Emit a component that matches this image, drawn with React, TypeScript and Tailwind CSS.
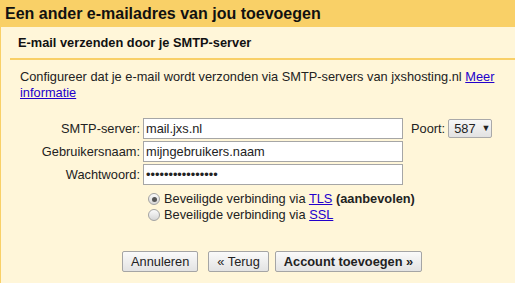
import React from "react";

function Radio({ checked }: { checked?: boolean }) {
  return (
    <span className="relative inline-block w-[12px] h-[12px] shrink-0 rounded-full border border-[#a3a3a3] bg-gradient-to-b from-[#fbfbfb] to-[#d6d6d6]">
      {checked && (
        <span className="absolute left-[2.5px] top-[2.5px] w-[5px] h-[5px] rounded-full bg-[#555]" />
      )}
    </span>
  );
}

function Btn({ children, bold }: { children: React.ReactNode; bold?: boolean }) {
  return (
    <button
      className={
        "h-[21px] px-[8px] rounded-[2px] border border-[#a5a5a5] bg-gradient-to-b from-[#fafafa] to-[#e3e3e3] text-[12.8px] leading-[19px] text-[#222] whitespace-nowrap " +
        (bold ? "font-bold" : "")
      }
    >
      {children}
    </button>
  );
}

export default function App() {
  return (
    <div className="w-[515px] h-[283px] overflow-hidden flex flex-col font-['Liberation_Sans',Arial,sans-serif] text-[#222]">
      <div className="h-[27px] shrink-0 bg-[#f9d067] px-[5px] text-[16px] font-bold leading-[27px] text-[#111]">
        Een ander e-mailadres van jou toevoegen
      </div>
      <div className="flex-1 bg-[#fff6d9] border-l border-[#f9d067]">
        <div className="mt-[8px] pl-[17px] text-[12.8px] font-bold leading-[16px] text-[#111]">
          E-mail verzenden door je SMTP-server
        </div>
        <div className="mt-[7px] ml-[9px] h-[2px] bg-[#f9d067]" />
        <p className="mt-[9px] pl-[19px] pr-[18px] text-[12.8px] leading-[16px]">
          Configureer dat je e-mail wordt verzonden via SMTP-servers van jxshosting.nl{" "}
          <a className="text-[#2200cc] underline" href="#">
            Meer informatie
          </a>
        </p>
        <div className="mt-[17px] flex flex-col gap-[2px] text-[12.8px]">
          <div className="flex items-center h-[21px]">
            <div className="w-[142px] text-right pr-[3px]">SMTP-server:</div>
            <input
              className="w-[260px] h-[21px] border border-[#a6a6a6] bg-white px-[2px] text-[12.8px] outline-none"
              defaultValue="mail.jxs.nl"
            />
            <span className="ml-[8px]">Poort:</span>
            <span className="ml-[3px] h-[19px] w-[44px] flex items-center rounded-[2px] border border-[#a9a9a9] bg-gradient-to-b from-[#f7f7f7] to-[#e2e2e2] pl-[5px] text-[12.8px]">
              587
              <span className="ml-[6px] text-[9px]">▼</span>
            </span>
          </div>
          <div className="flex items-center h-[21px]">
            <div className="w-[142px] text-right pr-[3px]">Gebruikersnaam:</div>
            <input
              className="w-[260px] h-[21px] border border-[#a6a6a6] bg-white px-[2px] text-[12.8px] outline-none"
              defaultValue="mijngebruikers.naam"
            />
          </div>
          <div className="flex items-center h-[21px]">
            <div className="w-[142px] text-right pr-[3px]">Wachtwoord:</div>
            <input
              type="password"
              className="w-[260px] h-[21px] border border-[#a6a6a6] bg-white px-[2px] text-[12.8px] outline-none"
              defaultValue="abcdefghijklmnop"
            />
          </div>
        </div>
        <div className="mt-[6px] ml-[147px] flex flex-col text-[12.8px] leading-[16px]">
          <div className="flex items-center h-[16px]">
            <Radio checked />
            <span className="ml-[4px]">
              Beveiligde verbinding via{" "}
              <a className="text-[#2200cc] underline" href="#">TLS</a>{" "}
              <b>(aanbevolen)</b>
            </span>
          </div>
          <div className="flex items-center h-[16px]">
            <Radio />
            <span className="ml-[4px]">
              Beveiligde verbinding via{" "}
              <a className="text-[#2200cc] underline" href="#">SSL</a>
            </span>
          </div>
        </div>
        <div className="mt-[26px] ml-[121px] flex items-center">
          <Btn>Annuleren</Btn>
          <span className="ml-[10px]">
            <Btn>« Terug</Btn>
          </span>
          <span className="ml-[6px]">
            <Btn bold>Account toevoegen »</Btn>
          </span>
        </div>
      </div>
    </div>
  );
}
